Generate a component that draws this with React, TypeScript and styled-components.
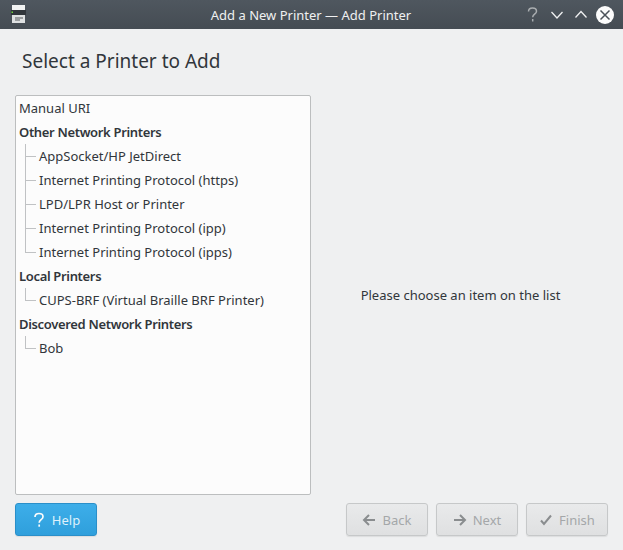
import React from "react";
import styled, { createGlobalStyle } from "styled-components";

const Global = createGlobalStyle`
  html, body { margin: 0; padding: 0; background: #eff0f1; }
  * { box-sizing: border-box; }
`;
const Window = styled.div`
  width: 623px; height: 550px; display: flex; flex-direction: column; overflow: hidden;
  background: #eff0f1; color: #31363b; font-family: "Noto Sans", sans-serif; font-size: 13px;
`;
const TitleBar = styled.header`
  height: 29px; flex: none; display: flex; align-items: center; padding: 0 9px 0 11px;
  background: linear-gradient(#4f575f, #454c53); color: #eff0f1;
`;
const AppIcon = styled.svg`width: 15px; height: 19px; flex: none;`;
const WindowTitle = styled.div`flex: 1; text-align: center; font-size: 13px; padding-left: 70px;`;
const Controls = styled.div`display: flex; align-items: center; gap: 10px;`;
const Ctl = styled.svg`width: 14px; height: 16px; display: block;`;
const Close = styled.svg`width: 18px; height: 18px; display: block; margin-left: -2px;`;
const Heading = styled.h1`
  margin: 0; height: 66px; padding: 16px 0 0 22px; font-size: 19px; line-height: 32px; font-weight: 400; color: #31363b;
`;
const Body = styled.main`
  flex: none; height: 400px; margin: 0 15px; display: grid; grid-template-columns: 296px 299px;
`;
const List = styled.ul`
  list-style: none; margin: 0; padding: 0; background: #fcfcfc; border: 1px solid #bcbebf; border-radius: 2px;
`;
const Row = styled.li<{ $bold?: boolean }>`
  height: 24px; display: flex; align-items: stretch; padding-left: 3px;
  line-height: 24px; font-weight: ${p => (p.$bold ? 600 : 400)}; letter-spacing: ${p => (p.$bold ? "-0.33px" : "0")};
  color: #31363b; white-space: nowrap;
`;
const ChildRow = styled(Row)`padding-left: 9px;`;
const Branch = styled.span<{ $last?: boolean }>`
  width: 11px; margin-right: 3px; flex: none;
  background:
    linear-gradient(#c0c2c4, #c0c2c4) left top / 1px ${p => (p.$last ? "50%" : "100%")} no-repeat,
    linear-gradient(#c0c2c4, #c0c2c4) left center / 100% 1px no-repeat;
`;
const Placeholder = styled.div`
  display: flex; align-items: center; justify-content: center; color: #31363b;
`;
const Footer = styled.footer`
  margin: 8px 15px 0; display: flex; gap: 8px; height: 33px;
`;
const Spacer = styled.div`flex: 1;`;
const Button = styled.button<{ $primary?: boolean }>`
  width: 82px; height: 33px; padding: ${p => (p.$primary ? "0 1px 0 0" : "0 2px 0 0")};
  display: flex; align-items: center; justify-content: center; gap: ${p => (p.$primary ? 5 : 6)}px;
  font: inherit; border-radius: 3px;
  border: 1px solid ${p => (p.$primary ? "#2a8fc9" : "#c6c8c9")};
  background: ${p => (p.$primary ? "linear-gradient(#3daee9, #2f9fdc)" : "linear-gradient(#e9eaeb, #dfe0e1)")};
  color: ${p => (p.$primary ? "#dff1fb" : "#a4a7a9")};
  box-shadow: 0 1px 1px rgba(0,0,0,.08);
`;
const BtnIcon = styled.svg`width: 16px; height: 16px; flex: none;`;
const BtnGroup = styled.div`display: flex; gap: 8px; margin-right: 0;`;

const App = () => (
  <Window>
    <Global />
    <TitleBar>
      <AppIcon viewBox="0 0 15 19">
        <rect x="1" y="0" width="13" height="5" fill="#f2f3f3" />
        <rect x="0" y="5" width="15" height="5" fill="#31363b" />
        <rect x="0.5" y="6.5" width="1.5" height="1.5" fill="#6cd13a" />
        <rect x="1" y="10" width="13" height="8" fill="#dfe1e2" />
        <rect x="4" y="12" width="8" height="2" fill="#9a9d9f" />
        <rect x="4" y="14" width="5" height="2" fill="#9a9d9f" />
      </AppIcon>
      <WindowTitle>Add a New Printer — Add Printer</WindowTitle>
      <Controls>
        <Ctl viewBox="0 0 14 16" fill="none" stroke="#a9adb0" strokeWidth="1.5">
          <path d="M2.5 4.5C2.5 2.4 4.2 1 6.5 1s4 1.3 4 3.2c0 3-3.8 3-3.8 6" />
          <path d="M6.7 12v2.5" />
        </Ctl>
        <Ctl viewBox="0 0 14 16" fill="none" stroke="#eff0f1" strokeWidth="1.3"><path d="M1.5 5l5.5 6 5.5-6" /></Ctl>
        <Ctl viewBox="0 0 14 16" fill="none" stroke="#eff0f1" strokeWidth="1.3"><path d="M1.5 10.5l5.5-6 5.5 6" /></Ctl>
        <Close viewBox="0 0 18 18">
          <circle cx="9" cy="9" r="9" fill="#fcfcfc" />
          <path d="M4.5 4.5l9 9M13.5 4.5l-9 9" stroke="#4b5259" strokeWidth="1.5" fill="none" />
        </Close>
      </Controls>
    </TitleBar>
    <Heading>Select a Printer to Add</Heading>
    <Body>
      <List>
        <Row>Manual URI</Row>
        <Row $bold>Other Network Printers</Row>
        <ChildRow><Branch />AppSocket/HP JetDirect</ChildRow>
        <ChildRow><Branch />Internet Printing Protocol (https)</ChildRow>
        <ChildRow><Branch />LPD/LPR Host or Printer</ChildRow>
        <ChildRow><Branch />Internet Printing Protocol (ipp)</ChildRow>
        <ChildRow><Branch $last />Internet Printing Protocol (ipps)</ChildRow>
        <Row $bold>Local Printers</Row>
        <ChildRow><Branch $last />CUPS-BRF (Virtual Braille BRF Printer)</ChildRow>
        <Row $bold>Discovered Network Printers</Row>
        <ChildRow><Branch $last />Bob</ChildRow>
      </List>
      <Placeholder>Please choose an item on the list</Placeholder>
    </Body>
    <Footer>
      <Button $primary>
        <BtnIcon viewBox="0 0 16 16" fill="none" stroke="#fcfcfc" strokeWidth="1.7">
          <path d="M4 5c0-2.2 1.7-3.5 4-3.5s4 1.3 4 3.2c0 3-3.8 3-3.8 6" />
          <path d="M8.2 12.5v2.2" />
        </BtnIcon>
        Help
      </Button>
      <Spacer />
      <BtnGroup>
        <Button>
          <BtnIcon viewBox="0 0 16 16" fill="none" stroke="#8a8d8f" strokeWidth="2"><path d="M14 8H3M8 3L3 8l5 5" /></BtnIcon>
          Back
        </Button>
        <Button>
          <BtnIcon viewBox="0 0 16 16" fill="none" stroke="#8a8d8f" strokeWidth="2"><path d="M3 8h11M9 3l5 5-5 5" /></BtnIcon>
          Next
        </Button>
        <Button>
          <BtnIcon viewBox="0 0 16 16" fill="none" stroke="#8a8d8f" strokeWidth="2"><path d="M4 8.5l3 3.5 7-8.5" /></BtnIcon>
          Finish
        </Button>
      </BtnGroup>
    </Footer>
  </Window>
);

export default App;
